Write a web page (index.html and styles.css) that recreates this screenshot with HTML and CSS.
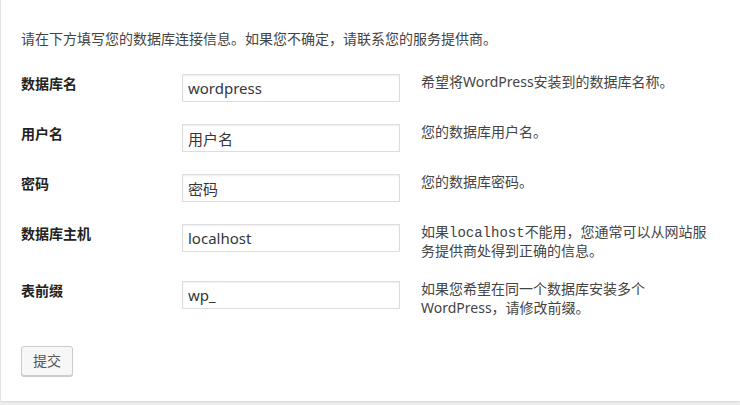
FILE: index.html
```html
<!DOCTYPE html>
<html lang="zh-CN">
<head>
<meta charset="utf-8">
<title>WordPress › 安装配置文件</title>
<link rel="stylesheet" href="styles.css">
</head>
<body>
<div class="card">
  <p class="intro">请在下方填写您的数据库连接信息。如果您不确定，请联系您的服务提供商。</p>
  <form class="form">
    <div class="row">
      <label class="label">数据库名</label>
      <input class="field" type="text" value="wordpress">
      <div class="desc">希望将WordPress安装到的数据库名称。</div>
    </div>
    <div class="row">
      <label class="label">用户名</label>
      <input class="field" type="text" value="用户名">
      <div class="desc">您的数据库用户名。</div>
    </div>
    <div class="row">
      <label class="label">密码</label>
      <input class="field" type="text" value="密码">
      <div class="desc">您的数据库密码。</div>
    </div>
    <div class="row">
      <label class="label">数据库主机</label>
      <input class="field" type="text" value="localhost">
      <div class="desc">如果<code>localhost</code>不能用，您通常可以从网站服务提供商处得到正确的信息。</div>
    </div>
    <div class="row">
      <label class="label">表前缀</label>
      <input class="field" type="text" value="wp_">
      <div class="desc">如果您希望在同一个数据库安装多个WordPress，请修改前缀。</div>
    </div>
    <div class="actions">
      <button class="button" type="button">提交</button>
    </div>
  </form>
</div>
</body>
</html>
```

FILE: styles.css
```css
html, body {
  margin: 0;
  padding: 0;
}
body {
  background: #f1f1f1;
  font-family: "Noto Sans", "Noto Sans CJK SC", sans-serif;
  font-size: 14px;
  color: #444;
  overflow: hidden;
  height: 405px;
}
.card {
  background: #fff;
  border-left: 1px solid #e2e2e2;
  box-shadow: 0 1px 3px rgba(0, 0, 0, 0.13);
  padding: 29px 0 24px 20px;
  height: 401px;
  box-sizing: border-box;
}
.intro {
  margin: 0 0 14px 0;
  line-height: 20px;
}
.row {
  display: grid;
  grid-template-columns: 161px 218px 313px;
  padding: 9px 0 10px;
  align-items: start;
}
.label {
  font-weight: bold;
  color: #222;
  line-height: 20px;
  padding-top: 2px;
}
.field {
  box-sizing: border-box;
  width: 218px;
  height: 28px;
  margin: 2px 0 1px;
  border: 1px solid #ddd;
  box-shadow: inset 0 1px 2px rgba(0, 0, 0, 0.07);
  padding: 0 5px;
  font-family: "Noto Sans", "Noto Sans CJK SC", sans-serif;
  font-size: 15px;
  color: #32373c;
  background: #fff;
  outline: none;
}
.desc {
  margin-left: 21px;
  line-height: 19px;
  color: #444;
}
.desc code {
  font-family: "Liberation Mono", "DejaVu Sans Mono", monospace;
  font-size: 14px;
  line-height: 1;
}
.actions {
  padding-top: 19px;
}
.button {
  height: 30px;
  padding: 0 11px;
  border: 1px solid #ccc;
  border-radius: 3px;
  background: #f7f7f7;
  box-shadow: 0 1px 0 #ccc;
  color: #555;
  font-family: "Noto Sans", "Noto Sans CJK SC", sans-serif;
  font-size: 14px;
  line-height: 28px;
}
```
